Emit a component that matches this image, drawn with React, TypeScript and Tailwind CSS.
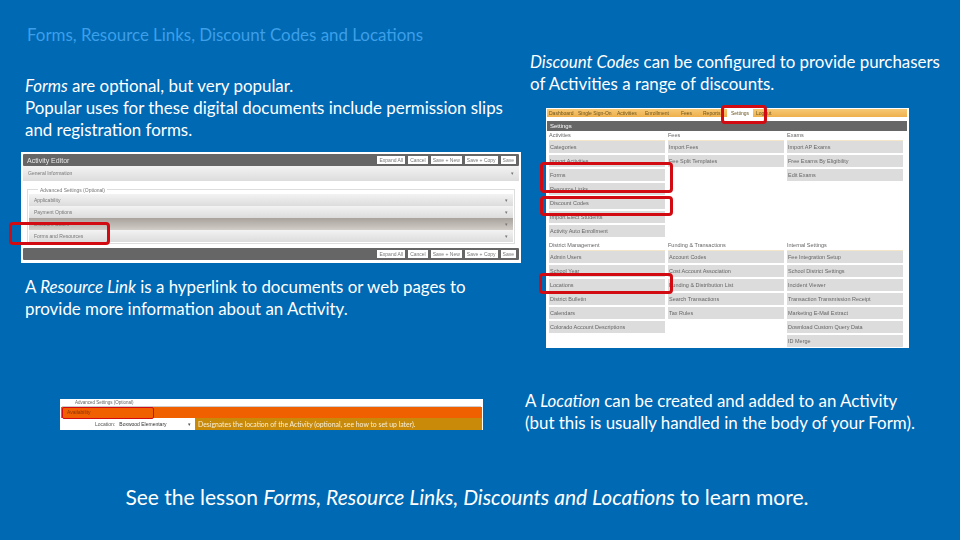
const font = { fontFamily: 'Lato, "Open Sans", sans-serif' };

function Bar({ top }: { top?: boolean }) {
  const btns = ['Expand All', 'Cancel', 'Save + New', 'Save + Copy', 'Save'];
  return (
    <div className="h-[12px] bg-[#666666] flex items-center justify-end gap-[3px] pr-[3px] pl-[4px] rounded-[1px]">
      {top && <span className="mr-auto text-[7px] leading-none text-[#e8e8e8] font-['Liberation_Sans',sans-serif]">Activity Editor</span>}
      {btns.map((b) => (
        <span key={b} className="h-[8px] px-[2px] bg-white text-[#777] text-[5px] leading-[8px] font-['Liberation_Sans',sans-serif] whitespace-nowrap">{b}</span>
      ))}
    </div>
  );
}

function EditorRow({ label, dark, className }: { label: string; dark?: boolean; className: string }) {
  return (
    <div className={`flex items-center justify-between px-[5px] text-[5px] leading-none text-[#777] font-['Liberation_Sans',sans-serif] ${dark ? 'bg-gradient-to-b from-[#a9a29c] to-[#d2cdc8]' : 'bg-gradient-to-b from-[#f3f3f3] to-[#dcdcdc]'} ${className}`}>
      <span>{label}</span>
      <span>▾</span>
    </div>
  );
}

function ActivityEditor() {
  return (
    <div className="relative w-[500px] h-[111px] bg-white px-[2px] pt-[2px] mt-[11px] -ml-[4px]">
      <div className="blur-[0.5px]">
        <Bar top />
        <EditorRow label="General Information" className="h-[15px]" />
        <div className="relative mx-[4px] mt-[8px] h-[55px] border border-[#dddddd] px-[1px] pt-[4px]">
          <span className="absolute -top-[4px] left-[10px] bg-white px-[2px] text-[5px] leading-[8px] text-[#777] font-['Liberation_Sans',sans-serif]">Advanced Settings (Optional)</span>
          <EditorRow label="Applicability" className="h-[12px]" />
          <EditorRow label="Payment Options" className="h-[12px]" />
          <EditorRow label="Discount Codes" dark className="h-[12px]" />
          <EditorRow label="Forms and Resources" className="h-[12px]" />
        </div>
        <div className="mt-[4px]">
          <Bar />
        </div>
      </div>
      <div className="absolute left-[-12px] top-[70px] w-[101px] h-[23px] border-[3px] border-[#d20a11] rounded-[4px]" />
    </div>
  );
}

const settingsTop = [
  { title: 'Activities', items: ['Categories', 'Import Activities', 'Forms', 'Resource Links', 'Discount Codes', 'Import Elect Students', 'Activity Auto Enrollment'] },
  { title: 'Fees', items: ['Import Fees', 'Fee Split Templates'] },
  { title: 'Exams', items: ['Import AP Exams', 'Free Exams By Eligibility', 'Edit Exams'] },
];
const settingsBottom = [
  { title: 'District Management', items: ['Admin Users', 'School Year', 'Locations', 'District Bulletin', 'Calendars', 'Colorado Account Descriptions'] },
  { title: 'Funding & Transactions', items: ['Account Codes', 'Cost Account Association', 'Funding & Distribution List', 'Search Transactions', 'Tax Rules'] },
  { title: 'Internal Settings', items: ['Fee Integration Setup', 'School District Settings', 'Incident Viewer', 'Transaction Transmission Receipt', 'Marketing E-Mail Extract', 'Download Custom Query Data', 'ID Merge'] },
];

function SettingsGrid({ cols }: { cols: { title: string; items: string[] }[] }) {
  return (
    <div className="grid grid-cols-3 gap-x-[3px] pl-[2px] pr-[6px]">
      {cols.map((c) => (
        <div key={c.title} className="flex flex-col gap-[2px]">
          <div className="h-[10px] mb-[-2px] border-b border-[#f4e6c8] text-[5.5px] leading-[9px] text-[#666] font-['Liberation_Sans',sans-serif] whitespace-nowrap">{c.title}</div>
          {c.items.map((i) => (
            <div key={i} className="h-[12px] bg-[#dcdcdc] px-[1px] text-[5.5px] leading-[12px] text-[#666] font-['Liberation_Sans',sans-serif] whitespace-nowrap">{i}</div>
          ))}
        </div>
      ))}
    </div>
  );
}

function SettingsPanel() {
  return (
    <div className="relative w-[363px] h-[240px] bg-white ml-[16px] mt-[13px] pt-[1px] pl-[1px]">
      <div className="blur-[0.5px]">
        <div className="h-[8px] w-[360px] bg-gradient-to-b from-[#f6c873] to-[#eeb04c] flex items-center pl-[2px] text-[5px] leading-none text-[#6b5520] font-['Liberation_Sans',sans-serif] whitespace-nowrap">
          <span className="w-[29px]">Dashboard</span>
          <span className="w-[39px]">Single Sign-On</span>
          <span className="w-[28px]">Activities</span>
          <span className="w-[36px]">Enrollment</span>
          <span className="w-[22px]">Fees</span>
          <span className="w-[24px]">Reports</span>
          <span className="w-[26px] bg-white text-center leading-[8px]">Settings</span>
          <span className="ml-[3px]">Logout</span>
        </div>
        <div className="h-[10px] w-[360px] mt-[4px] bg-[#666666] text-[6px] leading-[10px] text-white pl-[3px] font-['Liberation_Sans',sans-serif]">Settings</div>
        <SettingsGrid cols={settingsTop} />
        <div className="mt-[4px]">
          <SettingsGrid cols={settingsBottom} />
        </div>
      </div>
      <div className="absolute left-[175px] -top-[3px] w-[46px] h-[19px] border-[3px] border-[#d20a11] rounded-[4px]" />
      <div className="absolute -left-[6px] top-[54px] w-[133px] h-[31px] border-[3px] border-[#d20a11] rounded-[4px]" />
      <div className="absolute -left-[6px] top-[88px] w-[133px] h-[20px] border-[3px] border-[#d20a11] rounded-[4px]" />
      <div className="absolute -left-[7px] top-[165px] w-[134px] h-[21px] border-[3px] border-[#d20a11] rounded-[4px]" />
    </div>
  );
}

function LocationPanel() {
  return (
    <div className="relative w-[423px] h-[31px] bg-white ml-[35px] mt-[79px]">
      <div className="blur-[0.4px]">
        <div className="relative h-[8px] mx-[2px] border-b border-[#cccccc] mb-[-1px]">
          <span className="absolute left-[12px] top-0 bg-white px-[1px] text-[4.5px] leading-[7px] text-[#666] font-['Liberation_Sans',sans-serif]">Advanced Settings (Optional)</span>
        </div>
        <div className="h-[11px] bg-[#f06000] mx-[1px] mt-[1px] pl-[6px] text-[5px] leading-[11px] text-[#8a3200] font-['Liberation_Sans',sans-serif]">Availability</div>
        <div className="flex h-[12px]">
          <div className="w-[135px] flex items-center text-[5px] leading-none text-[#555] font-['Liberation_Sans',sans-serif]">
            <span className="ml-[35px]">Location:</span>
            <span className="ml-[4px] text-[#333]">Boxwood Elementary</span>
            <span className="ml-auto mr-[4px]">▾</span>
          </div>
          <div className="w-[287px] bg-[#c98a0a] pl-[3px] text-[6.85px] leading-[12px] text-[#f7efd8] whitespace-nowrap" style={font}>
            Designates the location of the Activity (optional, see how to set up later).
          </div>
        </div>
      </div>
      <div className="absolute left-[2px] top-[8px] w-[92px] h-[12px] border border-[#d20a11] rounded-[2px]" />
    </div>
  );
}

export default function App() {
  return (
    <div className="w-[960px] h-[540px] overflow-hidden bg-[#0069b4] text-white" style={font}>
      <div className="flex h-[476px]">
        <div className="w-[525px] pl-[25px] shrink-0">
          <h1 className="mt-[25px] ml-[2px] text-[16.9px] leading-[20px] font-normal text-[#3d9fe8] whitespace-nowrap">Forms, Resource Links, Discount Codes and Locations</h1>
          <p className="mt-[30px] text-[16.9px] leading-[22px] whitespace-nowrap">
            <em>Forms</em> are optional, but very popular.<br />
            Popular uses for these digital documents include permission slips<br />
            and registration forms.
          </p>
          <ActivityEditor />
          <p className="mt-[13px] text-[16.9px] leading-[22px] whitespace-nowrap">
            A <em>Resource Link</em> is a hyperlink to documents or web pages to<br />
            provide more information about an Activity.
          </p>
          <LocationPanel />
        </div>
        <div className="flex-1 pl-[5px]">
          <p className="mt-[51px] text-[16.9px] leading-[22px] whitespace-nowrap">
            <em>Discount Codes</em> can be configured to provide purchasers<br />
            of Activities a range of discounts.
          </p>
          <SettingsPanel />
          <p className="mt-[42px] -ml-[5px] text-[16.9px] leading-[22px] whitespace-nowrap">
            A <em>Location</em> can be created and added to an Activity<br />
            (but this is usually handled in the body of your Form).
          </p>
        </div>
      </div>
      <p className="mt-[7px] text-center pr-[26px] text-[21px] leading-[28px] whitespace-nowrap">
        See the lesson <em>Forms, Resource Links, Discounts and Locations</em> to learn more.
      </p>
    </div>
  );
}
